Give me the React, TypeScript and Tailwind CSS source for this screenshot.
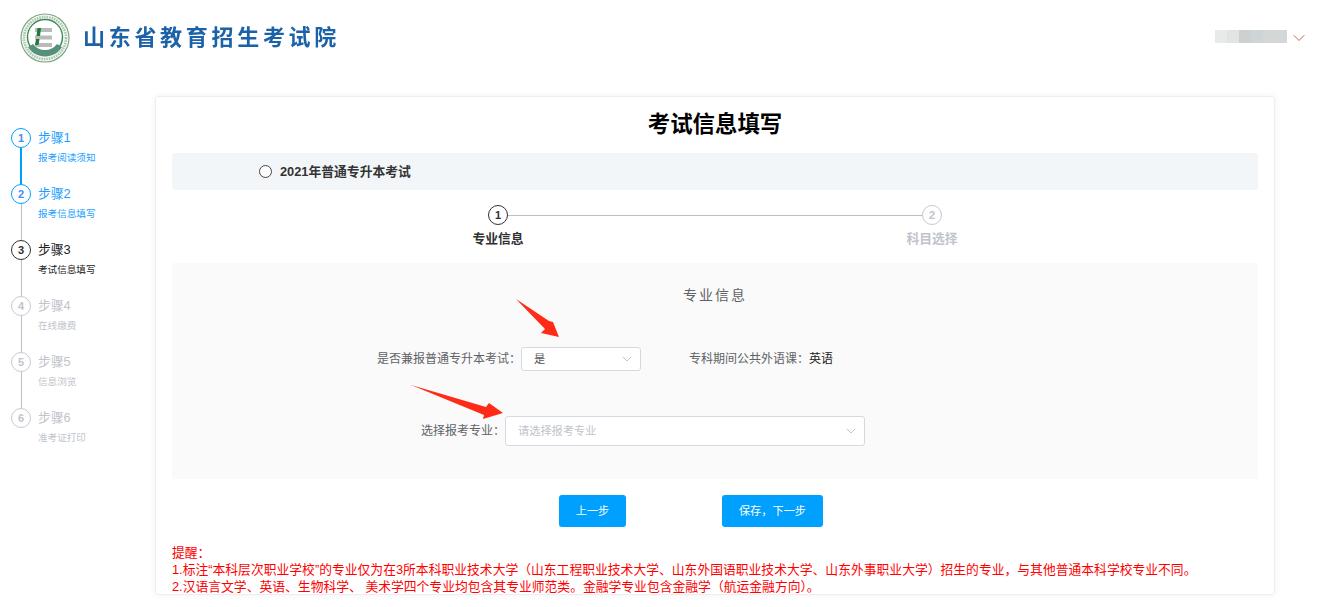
import { ChevronDown } from 'lucide-react';

const steps = [
  { n: 1, title: '步骤1', sub: '报考阅读须知', state: 'done' },
  { n: 2, title: '步骤2', sub: '报考信息填写', state: 'done' },
  { n: 3, title: '步骤3', sub: '考试信息填写', state: 'active' },
  { n: 4, title: '步骤4', sub: '在线缴费', state: 'todo' },
  { n: 5, title: '步骤5', sub: '信息浏览', state: 'todo' },
  { n: 6, title: '步骤6', sub: '准考证打印', state: 'todo' },
];

const blurBlocks = ['bg-[#e8eaea]', 'bg-[#e2e3e3]', 'bg-[#cdd0d0]', 'bg-[#cdd5d7]', 'bg-[#d5d7d6]', 'bg-[#d2d7d9]'];

function Logo() {
  return (
    <svg width="50" height="50" viewBox="0 0 50 50" className="blur-[0.5px]">
      <circle cx="25" cy="25" r="24" fill="#f3f6f1" stroke="#7fa888" strokeWidth="1.2" />
      <circle cx="25" cy="25" r="21" fill="none" stroke="#a9c4ae" strokeWidth="2.5" strokeDasharray="1.5 1" />
      <circle cx="25" cy="24" r="17.5" fill="#fff" stroke="#3c8a55" strokeWidth="1.4" />
      <path d="M8 34 A20 20 0 0 0 42 34 L37 31 A15 15 0 0 1 13 31 Z" fill="#55917a" />
      <rect x="15" y="15" width="17" height="4" fill="#b9bbb9" />
      <rect x="15" y="22.5" width="17" height="4" fill="#b9bbb9" />
      <rect x="15" y="30" width="17" height="4" fill="#b9bbb9" />
      <path d="M17.5 15 h3.5 l-1 8 h-3.5 Z" fill="#1c7a3a" />
      <path d="M16 26 h3.5 l-1 6 h-3.5 Z" fill="#1c7a3a" />
    </svg>
  );
}

function StepItem({ step, last, lineBlue }: { step: (typeof steps)[number]; last: boolean; lineBlue: boolean }) {
  const circle =
    step.state === 'done'
      ? 'border-[#00a0ff] text-[#4a8cf0]'
      : step.state === 'active'
        ? 'border-[#303133] text-[#303133]'
        : 'border-[#c6c9d0] text-[#c0c4cc]';
  const text =
    step.state === 'done' ? 'text-[#1e9fff]' : step.state === 'active' ? 'text-[#222222]' : 'text-[#c0c4cc]';
  return (
    <div className="flex h-[56px]">
      <div className="flex w-[20px] flex-col items-center">
        <div className={`flex h-[20px] w-[20px] shrink-0 items-center justify-center rounded-full border bg-white text-[11px] font-bold ${circle}`}>
          {step.n}
        </div>
        {!last && <div className={lineBlue ? 'w-[2px] flex-1 bg-[#00a0ff]' : 'w-px flex-1 bg-[#b9bec8]'} />}
      </div>
      <div className={`ml-[7px] ${text}`}>
        <div className="text-[12.8px] leading-[20px]">{step.title}</div>
        <div className="mt-[1px] text-[9.6px] leading-[18px]">{step.sub}</div>
      </div>
    </div>
  );
}

function Select({ width, height, value, placeholder }: { width: string; height: string; value: string; placeholder?: boolean }) {
  return (
    <div className={`flex items-center justify-between rounded-[3px] border border-[#d5d9e2] bg-white pl-[12px] pr-[5px] text-[11.2px] ${width} ${height} ${placeholder ? 'text-[#c0c4cc]' : 'text-[#555555]'}`}>
      <span>{value}</span>
      <ChevronDown size={16} strokeWidth={1.5} className="text-[#c0c4cc]" />
    </div>
  );
}

export default function App() {
  return (
    <div className="h-[607px] w-[1318px] overflow-hidden bg-white font-['Liberation_Sans','Noto_Sans_CJK_SC',sans-serif]">
      <header className="flex h-[96px] items-start">
        <div className="ml-[20px] mt-[13px] shrink-0">
          <Logo />
        </div>
        <div className="ml-[13px] mt-[22px] text-[22px] font-bold leading-[32px] tracking-[3.7px] text-[#1b62a8] blur-[0.3px]">
          山东省教育招生考试院
        </div>
        <div className="ml-auto mr-[9px] mt-[30px] flex items-start">
          <div className="flex h-[13px] w-[72px]">
            {blurBlocks.map((c, i) => (
              <div key={i} className={`flex-1 ${c}`} />
            ))}
          </div>
          <ChevronDown size={20} strokeWidth={1.2} className="-mt-[2px] ml-[2px] text-[#c0695c]" />
        </div>
      </header>

      <div className="flex">
        <aside className="w-[155px] shrink-0 pl-[11px] pt-[32px]">
          {steps.map((s, i) => (
            <StepItem key={s.n} step={s} last={i === steps.length - 1} lineBlue={i === 0} />
          ))}
        </aside>

        <main className="h-[499px] w-[1120px] shrink-0 overflow-hidden rounded-[3px] border border-[#ebeef5] px-[16px] shadow-[0_0_6px_rgba(0,0,0,0.06)]">
          <h1 className="h-[56px] pt-[12px] text-center text-[22.4px] font-bold leading-[32px] text-black">考试信息填写</h1>

          <div className="flex h-[37px] items-center rounded-[3px] bg-[#f3f6f9] pl-[87px]">
            <div className="h-[13px] w-[13px] rounded-full border border-[#444444] bg-white" />
            <span className="ml-[8px] text-[12.8px] font-bold text-[#333333]">2021年普通专升本考试</span>
          </div>

          <div className="h-[73px] pt-[15px]">
            <div className="mx-auto flex w-[454px] items-center">
              <div className="flex h-[20px] w-[20px] items-center justify-center rounded-full border border-[#303133] text-[11px] font-bold text-[#303133]">1</div>
              <div className="h-px flex-1 bg-[#b9bec8]" />
              <div className="flex h-[20px] w-[20px] items-center justify-center rounded-full border border-[#c6c9d0] text-[11px] font-bold text-[#c0c4cc]">2</div>
            </div>
            <div className="mx-auto mt-[5px] flex w-[868px] text-center text-[12.8px] font-bold leading-[18px]">
              <div className="flex-1 text-[#303133]">专业信息</div>
              <div className="flex-1 text-[#c0c4cc]">科目选择</div>
            </div>
          </div>

          <section className="relative h-[216px] bg-[#fafafa] pt-[23px]">
            <h2 className="text-center text-[14px] leading-[18px] tracking-[2px] text-[#606266]">专业信息</h2>

            <div className="mt-[43px] flex items-center text-[12px] text-[#606266]">
              <div className="w-[349px] text-right">是否兼报普通专升本考试：</div>
              <Select width="w-[120px]" height="h-[24px]" value="是" />
              <div className="ml-[48px]">
                专科期间公共外语课：<span className="text-[#222222]">英语</span>
              </div>
            </div>

            <div className="mt-[45px] flex items-center text-[12px] text-[#606266]">
              <div className="w-[333px] text-right">选择报考专业：</div>
              <Select width="w-[360px]" height="h-[30px]" value="请选择报考专业" placeholder />
            </div>

            <svg className="pointer-events-none absolute inset-0 h-full w-full">
              <polygon points="344,36 373,66 369,70 387,74 381,59 377,58" fill="#ff2a17" />
              <polygon points="239,122 314,144 317,140 331,150 311,156 312,152" fill="#ff2a17" />
            </svg>
          </section>

          <div className="flex pl-[387px] pt-[16px]">
            <button className="h-[32px] w-[67px] rounded-[3px] bg-[#00a0ff] text-[11.2px] text-white">上一步</button>
            <button className="ml-[96px] h-[32px] w-[101px] rounded-[3px] bg-[#00a0ff] text-[11.2px] text-white">保存，下一步</button>
          </div>

          <div className="pt-[17px] text-[12.8px] leading-[17px] text-[#ff0000]">
            <p>提醒：</p>
            <p>1.标注“本科层次职业学校”的专业仅为在3所本科职业技术大学（山东工程职业技术大学、山东外国语职业技术大学、山东外事职业大学）招生的专业，与其他普通本科学校专业不同。</p>
            <p>2.汉语言文学、英语、生物科学、 美术学四个专业均包含其专业师范类。金融学专业包含金融学（航运金融方向）。</p>
          </div>
        </main>
      </div>
    </div>
  );
}
